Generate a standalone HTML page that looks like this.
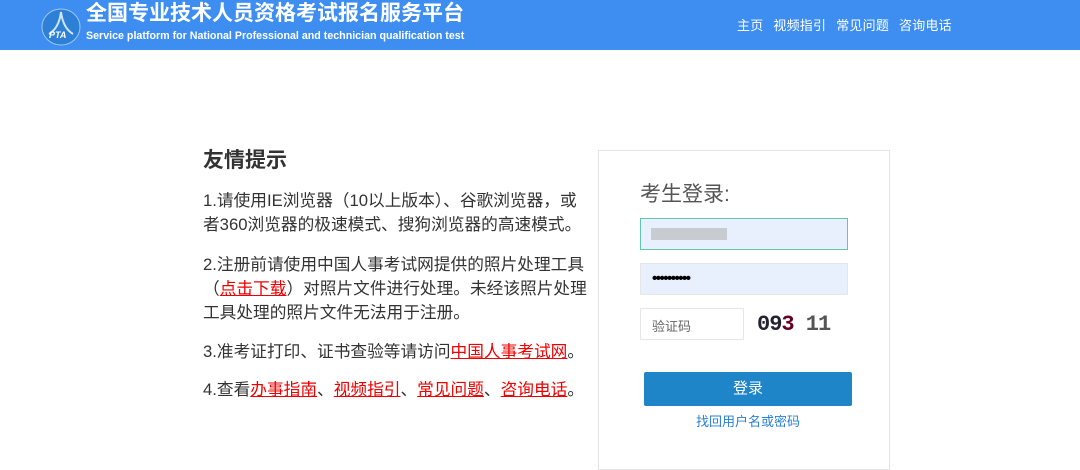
<!DOCTYPE html><html><head><meta charset="utf-8"><style>
body{margin:0;width:1080px;height:461px;overflow:hidden;background:#fff;font-family:"Liberation Sans","Noto Sans CJK SC",sans-serif;position:relative}
.hd{position:absolute;left:0;top:0;width:1080px;height:50px;background:#3d8ef0;color:#fff}
.t1{position:absolute;left:86px;top:0;font-size:21px;font-weight:bold;line-height:27px}
.t2{position:absolute;left:86px;top:30px;font-size:11px;font-weight:bold;transform:scaleX(0.97);transform-origin:left}
.nav{position:absolute;left:737px;top:15px;font-size:13px;letter-spacing:.2px}
.nav span{margin-right:10px}
.l{position:absolute;left:203px;color:#333;font-size:16.7px;line-height:24px;width:385px}
.r{color:#e00;text-decoration:underline}
.box{position:absolute;left:598px;top:150px;width:292px;height:320px;border:1px solid #e3e3e3;box-sizing:border-box}
.in{position:absolute;box-sizing:border-box;background:#e8f0fe;border:1px solid #e6e6e6}
</style></head><body>
<div class="hd">
<svg style="position:absolute;left:41px;top:8px" width="40" height="38"><ellipse cx="20" cy="19" rx="19" ry="18" fill="#2e7fd6" stroke="#9cc8f2"/><path d="M8 26 Q18 20 20 4 Q22 20 32 26" fill="none" stroke="#cfe6ff" stroke-width="2"/><text x="8" y="30" font-size="9" font-weight="bold" fill="#fff" font-style="italic">PTA</text></svg>
<div class="t1">全国专业技术人员资格考试报名服务平台</div>
<div class="t2">Service platform for National Professional and technician qualification test</div>
<div class="nav"><span>主页</span><span>视频指引</span><span>常见问题</span><span>咨询电话</span></div>
</div>
<div class="l" style="top:147px;font-size:21px;font-weight:bold;line-height:28px">友情提示</div>
<div class="l" style="top:189px">1.请使用IE浏览器（10以上版本）、谷歌浏览器，或<br>者360浏览器的极速模式、搜狗浏览器的高速模式。</div>
<div class="l" style="top:253px">2.注册前请使用中国人事考试网提供的照片处理工具<br>（<span class="r">点击下载</span>）对照片文件进行处理。未经该照片处理<br>工具处理的照片文件无法用于注册。</div>
<div class="l" style="top:340px">3.准考证打印、证书查验等请访问<span class="r">中国人事考试网</span>。</div>
<div class="l" style="top:378px">4.查看<span class="r">办事指南</span>、<span class="r">视频指引</span>、<span class="r">常见问题</span>、<span class="r">咨询电话</span>。</div>
<div class="box"></div>
<div style="position:absolute;left:640px;top:178px;font-size:21px;color:#555">考生登录:</div>
<div class="in" style="left:640px;top:218px;width:208px;height:32px;border-color:#5fc9ad"><div style="position:absolute;left:10px;top:9px;width:76px;height:12px;background:#bbb;opacity:.7"></div></div>
<div class="in" style="left:640px;top:263px;width:208px;height:32px"><div style="position:absolute;left:11px;top:6px;font-size:15px;font-weight:bold;letter-spacing:-1.5px">••••••••••</div></div>
<div class="in" style="left:640px;top:308px;width:104px;height:32px;background:#fff;font-size:13px;color:#666;padding:7px 11px">验证码</div>
<div style="position:absolute;left:757px;top:312px;font-size:22px;font-weight:bold;font-family:'Liberation Mono',monospace;color:#223;letter-spacing:-1px">09<span style="color:#602">3</span><span style="color:#555"> 11</span></div>
<div style="position:absolute;left:644px;top:372px;width:208px;height:34px;background:#1f85c9;border-radius:2px;color:#fff;font-size:15px;text-align:center;line-height:34px">登录</div>
<div style="position:absolute;left:644px;top:411px;width:208px;text-align:center;font-size:13px;color:#2a7fd4">找回用户名或密码</div>
</body></html>
